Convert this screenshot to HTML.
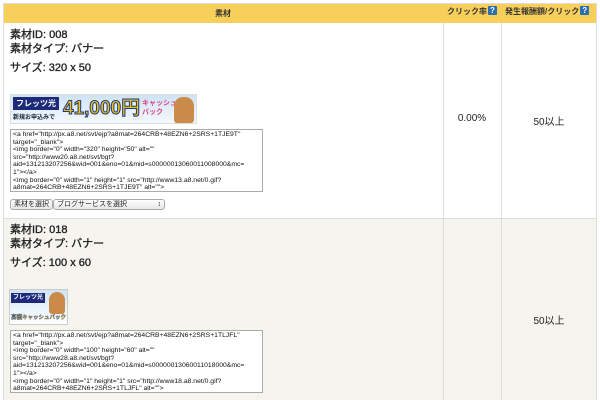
<!DOCTYPE html>
<html><head><meta charset="utf-8"><style>
*{margin:0;padding:0;box-sizing:border-box}
body{width:600px;height:400px;overflow:hidden;background:#fff;font-family:"Liberation Sans","Noto Sans CJK JP",sans-serif;color:#222;position:relative}
.a{position:absolute}
.hdr{left:3px;top:3px;width:594px;height:20px;background:#f9cf5b;border-top:1px solid #ddd}
.h{font-size:8px;font-weight:bold;color:#333;top:8px}
.q{display:inline-block;width:9px;height:9px;background:#2a6fb0;color:#fff;font-size:8px;line-height:9px;text-align:center;border-radius:1px;vertical-align:top;margin-left:1px}
.vl{width:1px;background:#ddd}
.t{font-size:11px;font-weight:normal;-webkit-text-stroke:0.35px #222;left:10px;line-height:14px}
.ta{left:10px;width:253px;height:63px;border:1px solid #aaa;background:#fff;font-size:6.8px;line-height:7.6px;padding:1px 2px;color:#111;white-space:nowrap;overflow:hidden}
.btn{border:1px solid #aaa;border-radius:3px;background:linear-gradient(#fff,#e6e6e6);font-size:7px;height:11px;line-height:9px;padding:0 3px;top:199px}
</style></head><body>
<div class="a hdr"></div>
<div class="a h" style="left:215px">素材</div>
<div class="a h" style="left:447px;top:6px">クリック率<span class="q">?</span></div>
<div class="a h" style="left:505px;top:6px">発生報酬額/クリック<span class="q">?</span></div>
<div class="a vl" style="left:3px;top:3px;height:397px"></div>
<div class="a vl" style="left:596px;top:3px;height:397px"></div>
<div class="a vl" style="left:443px;top:23px;height:377px"></div>
<div class="a vl" style="left:501px;top:23px;height:377px"></div>
<div class="a" style="left:4px;top:218px;width:592px;height:182px;background:#f5f4ef;border-top:1px solid #ddd"></div>
<div class="a vl" style="left:443px;top:218px;height:182px"></div>
<div class="a vl" style="left:501px;top:218px;height:182px"></div>

<div class="a t" style="top:28px">素材ID: 008<br>素材タイプ: バナー</div>
<div class="a t" style="top:61px">サイズ: 320 x 50</div>
<div class="a" style="left:10px;top:94px;width:187px;height:30px;background:linear-gradient(#cfe3f5,#f4f9fd);border:1px solid #ddd">
 <div class="a" style="left:2px;top:2px;width:46px;height:13px;background:#1d2a7a;color:#fff;font-size:8px;font-weight:bold;line-height:13px;text-align:center">フレッツ光</div>
 <div class="a" style="left:2px;top:17px;font-size:6px;font-weight:bold;color:#123">新規お申込みで</div>
 <div class="a" style="left:52px;top:2px;font-size:19px;font-weight:bold;color:#f5c400;line-height:24px;-webkit-text-stroke:1px #1d3a8a">41,000円</div>
 <div class="a" style="left:131px;top:4px;font-size:7px;font-weight:bold;color:#e04080;line-height:9px">キャッシュ<br>バック</div>
 <div class="a" style="left:163px;top:2px;width:20px;height:26px;background:#c98a4a;border-radius:9px 9px 3px 3px"></div>
</div>
<div class="a ta" style="top:129px">&lt;a href="http://px.a8.net/svt/ejp?a8mat=264CRB+48EZN6+2SRS+1TJE9T"<br>target="_blank"&gt;<br>&lt;img border="0" width="320" height="50" alt=""<br>src="http://www20.a8.net/svt/bgt?<br>aid=131213207256&amp;wid=001&amp;eno=01&amp;mid=s00000013060011008000&amp;mc=<br>1"&gt;&lt;/a&gt;<br>&lt;img border="0" width="1" height="1" src="http://www13.a8.net/0.gif?<br>a8mat=264CRB+48EZN6+2SRS+1TJE9T" alt=""&gt;</div>
<div class="a btn" style="left:10px">素材を選択</div>
<div class="a btn" style="left:53px;width:112px">ブログサービスを選択<span style="float:right">↕</span></div>
<div class="a" style="left:443px;top:113px;width:58px;text-align:center;font-size:10px">0.00%</div>
<div class="a" style="left:501px;top:113px;width:96px;text-align:center;font-size:10px">50以上</div>

<div class="a t" style="top:223px">素材ID: 018<br>素材タイプ: バナー</div>
<div class="a t" style="top:256px">サイズ: 100 x 60</div>
<div class="a" style="left:9px;top:289px;width:59px;height:36px;background:linear-gradient(#cfe3f5,#fff);border:1px solid #ccc;overflow:hidden">
 <div class="a" style="left:1px;top:3px;width:34px;height:10px;background:#1d2a7a;color:#fff;font-size:6px;font-weight:bold;line-height:10px;text-align:center">フレッツ光</div>
 <div class="a" style="left:39px;top:2px;width:16px;height:22px;background:#c98a4a;border-radius:8px 8px 3px 3px"></div>
 <div class="a" style="left:1px;top:23px;font-size:5.5px;font-weight:bold;white-space:nowrap;color:#f5c400;-webkit-text-stroke:.3px #1d3a8a">高額キャッシュバック</div>
</div>
<div class="a ta" style="top:330px">&lt;a href="http://px.a8.net/svt/ejp?a8mat=264CRB+48EZN6+2SRS+1TLJFL"<br>target="_blank"&gt;<br>&lt;img border="0" width="100" height="60" alt=""<br>src="http://www28.a8.net/svt/bgt?<br>aid=131213207256&amp;wid=001&amp;eno=01&amp;mid=s00000013060011018000&amp;mc=<br>1"&gt;&lt;/a&gt;<br>&lt;img border="0" width="1" height="1" src="http://www18.a8.net/0.gif?<br>a8mat=264CRB+48EZN6+2SRS+1TLJFL" alt=""&gt;</div>
<div class="a" style="left:501px;top:312px;width:96px;text-align:center;font-size:10px">50以上</div>
</body></html>
